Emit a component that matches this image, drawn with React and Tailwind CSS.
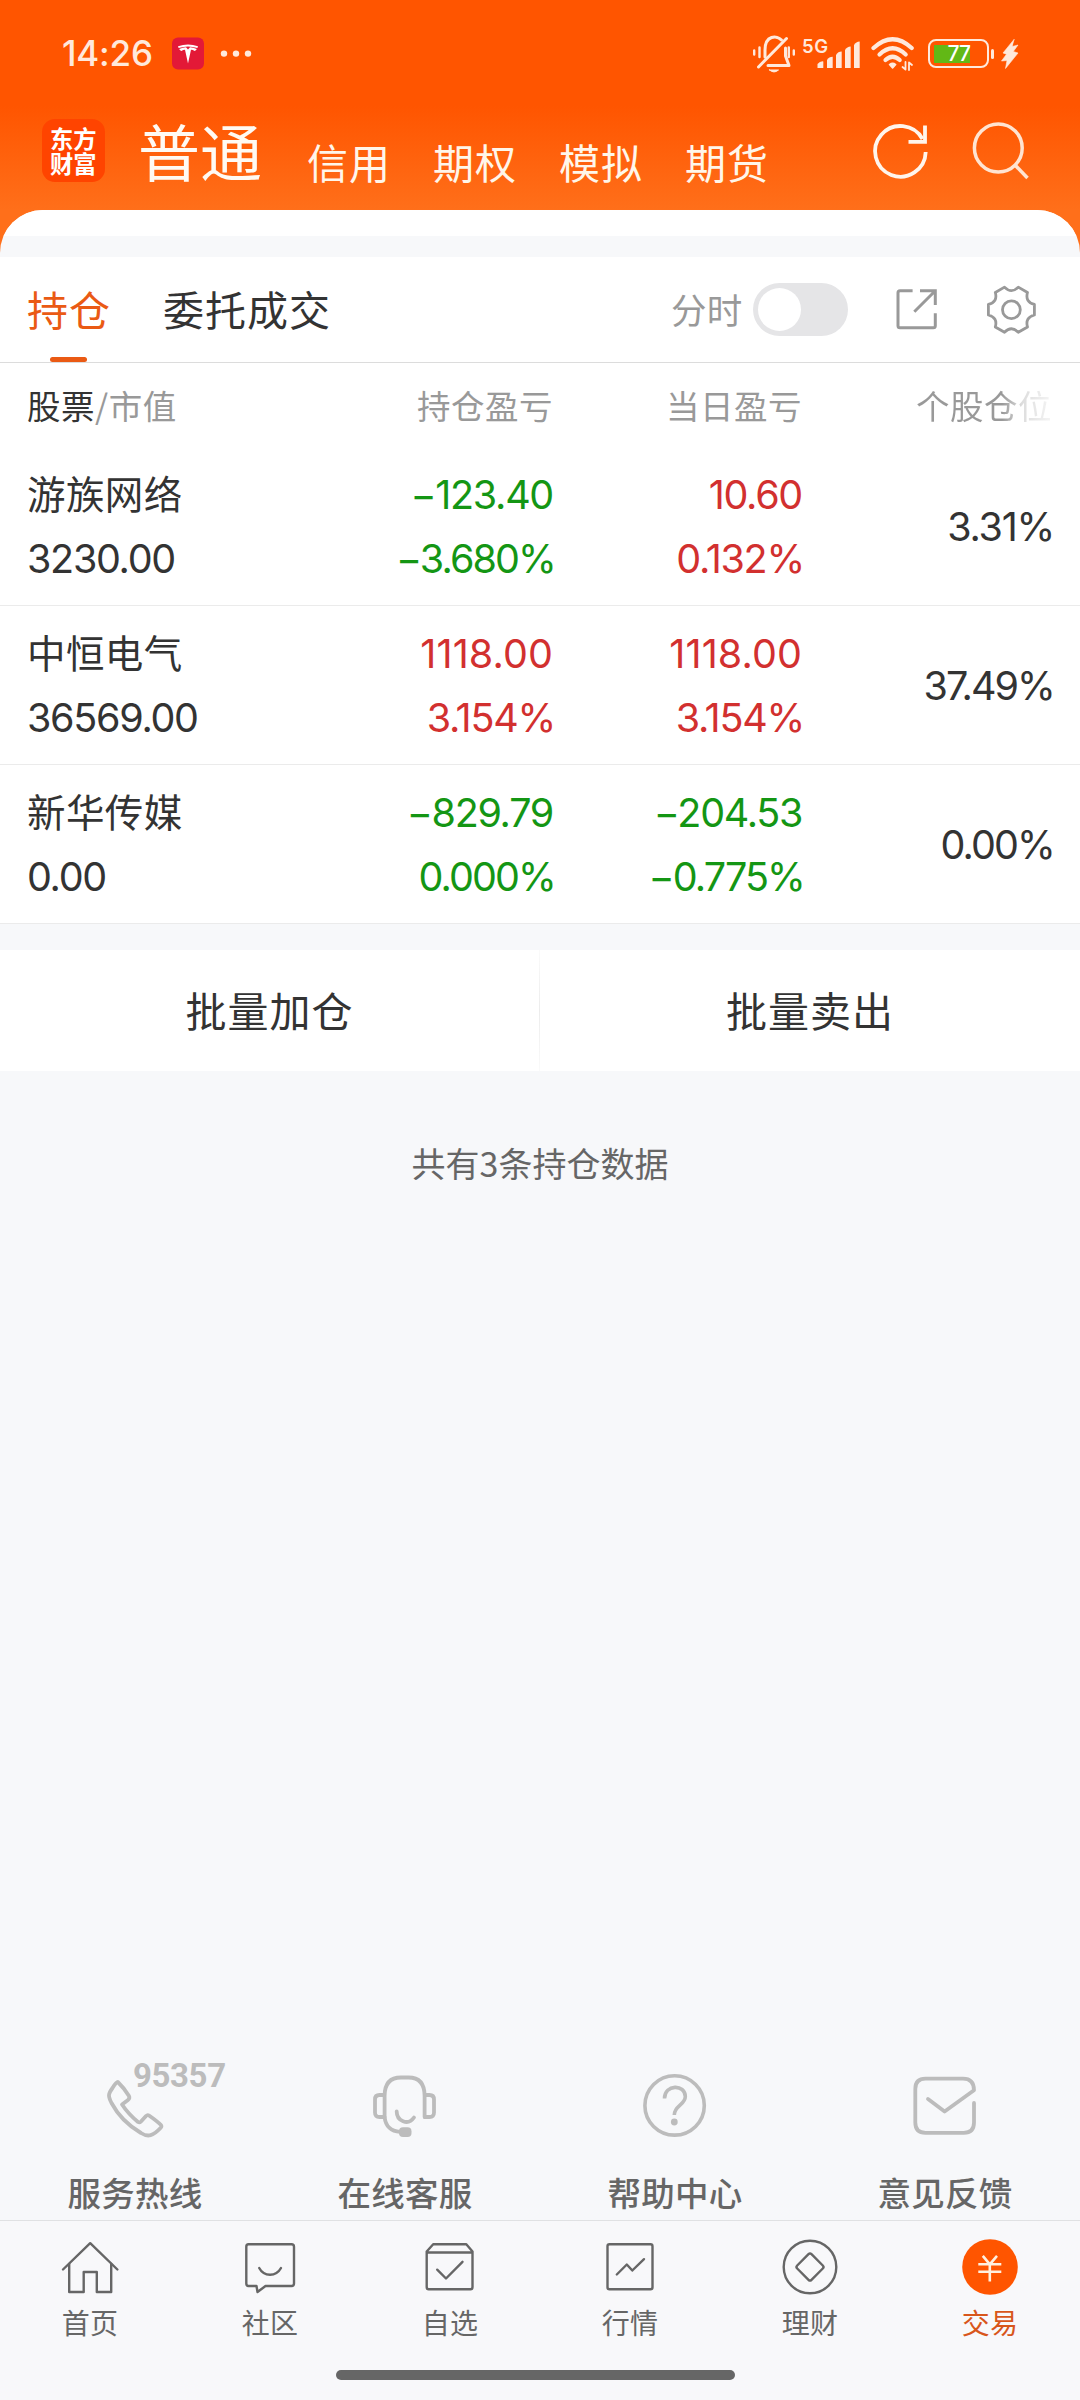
import React from "react";

const HOLDINGS = [
  { name: "游族网络", value: "3230.00", pl: ["−123.40", "−3.680%"], day: ["10.60", "0.132%"], ratio: "3.31%" },
  { name: "中恒电气", value: "36569.00", pl: ["1118.00", "3.154%"], day: ["1118.00", "3.154%"], ratio: "37.49%" },
  { name: "新华传媒", value: "0.00", pl: ["−829.79", "0.000%"], day: ["−204.53", "−0.775%"], ratio: "0.00%" },
];

const isDown = (pair) => pair.some((t) => t.startsWith("−"));

/* Figures are set slightly tight; percentages tighter still, runs of ones looser */
function figureClass(text) {
  if (text.endsWith("%")) {
    return text.includes("1") ? "tracking-[-1.25px] -mr-[2px]" : "tracking-[-1.9px] -mr-[2px]";
  }
  return text.startsWith("111") ? "tracking-[0.1px]" : "tracking-[-1.3px]";
}

/* Icon whose drawing units are screen pixels: box = "x y width height" */
function Icon({ box, className = "", width = 3, children }) {
  const [, , w, h] = box.split(" ");
  return (
    <svg
      viewBox={box}
      width={w}
      height={h}
      fill="none"
      stroke="currentColor"
      strokeWidth={width}
      strokeLinecap="round"
      strokeLinejoin="round"
      className={"shrink-0 " + className}
    >
      {children}
    </svg>
  );
}

function gearPath(cx, cy) {
  const p = (r, deg) => {
    const a = (deg * Math.PI) / 180;
    return `${(cx + r * Math.cos(a)).toFixed(2)} ${(cy + r * Math.sin(a)).toFixed(2)}`;
  };
  let d = `M${p(23.6, -13)}`;
  for (let i = 0; i < 6; i++) {
    const a = i * 60;
    d += `L${p(23.6, a + 13)}Q${p(15.5, a + 30)} ${p(23.6, a + 47)}`;
  }
  return d + "Z";
}

function StatusBar() {
  return (
    <div className="flex h-[107px] items-center justify-between pl-[62px] pr-[60px] text-[#ffe9dc]">
      <div className="flex h-[107px] items-center">
        <span className="w-[110px] font-[Inter] text-[35px] font-medium leading-[107px] tracking-[-0.200px]">14:26</span>
        <Icon box="172 38 32 33" width={2}>
          <rect x="172" y="38.500" width="32" height="32" rx="6" fill="#e31937" stroke="none" />
          <g fill="#fff" stroke="none">
            <path d="M178 47.300Q188 43.500 198 47.300L197.400 49Q188 45.800 178.600 49Z" />
            <path d="M179.200 50Q183 48.200 186 48.200L188 50.500L190 48.200Q193 48.200 196.800 50Q196.200 51.700 194.500 52Q193 50.800 191 50.800L188 64.500L185 50.800Q183 50.800 181.500 52Q179.800 51.700 179.200 50Z" />
          </g>
        </Icon>
        <Icon box="218 48 36 14" className="ml-[14px]">
          <g fill="currentColor" stroke="none">
            <circle cx="224" cy="54.600" r="3.200" />
            <circle cx="236" cy="54.600" r="3.200" />
            <circle cx="248" cy="54.600" r="3.200" />
          </g>
        </Icon>
      </div>
      <div className="flex h-[107px] items-center">
        <Icon box="752 34 44 40" width={3}>
          <path d="M765 57V50C765 35 777 35 781.500 40" />
          <path d="M785.500 48V56L789 65.500H768" />
          <path d="M786.500 38.500L758.500 67" />
          <path d="M769.500 70H778.500Q774 74 769.500 70Z" fill="currentColor" strokeWidth="1" />
          <path d="M754.200 50.500V54.500M759.500 47.500V57M788.800 47.500V57M793.800 50.500V54.500" strokeWidth="2.400" />
        </Icon>
        <span className="ml-[6px] h-[36px] w-[15px] whitespace-nowrap font-[Inter] text-[18.500px] font-semibold leading-[20px] tracking-[0.600px]">5G</span>
        <Icon box="817 38 44 32">
          <g fill="currentColor" stroke="none">
            <path d="M817.500 68V64Q820 61 823.300 61.400V68Z" />
            <path d="M827 68V60Q829 56.700 832.700 56.700V68Z" />
            <path d="M836 68V55Q838 51.600 841.700 51.600V68Z" />
            <path d="M845 68V50Q847 46.500 850.700 46.500V68Z" />
            <path d="M854 68V45Q856 41.500 859.700 41.500V68Z" />
          </g>
        </Icon>
        <Icon box="870 36 46 38" className="ml-[9px]" width={4.200}>
          <path d="M873.500 49Q892.600 31.500 911.700 49" />
          <path d="M879.500 55.500Q892.600 43 905.700 55.500" />
          <path d="M885.500 61Q892.600 54.500 899.700 61" />
          <path d="M889.500 65.500Q892.600 63 895.700 65.500L892.600 69Z" fill="currentColor" strokeWidth="1.500" />
          <path d="M905.500 63V70.500L902.500 68M909 71V63.500L912 66" strokeWidth="1.800" />
        </Icon>
        <div className="ml-[12px] flex h-[29px] w-[61px] items-center rounded-[8px] border-[2.500px] border-[#ffe9dc] pl-[4px]">
          <div className="flex h-[18px] w-[36px] items-center justify-end bg-[#62b816]">
            <span className="font-[Inter] text-[21px] font-medium leading-[18px] tracking-[-1px] text-white">77</span>
          </div>
        </div>
        <div className="ml-[2px] h-[10px] w-[3px] rounded-full bg-[#ffe9dc]" />
        <Icon box="1000 38 20 34" className="ml-[6px]" width={0.600}>
          <path d="M1014 40.500L1003 54L1006.500 55.200L1001.500 62L1007 61.500L1005.500 69.500L1018 54L1013.300 52.500L1018 46L1012.300 47.500Z" fill="currentColor" />
        </Icon>
      </div>
    </div>
  );
}

function AccountBar() {
  return (
    <div className="flex h-[103px] items-start pl-[42px]">
      <div className="mt-[12px] flex h-[63px] w-[63px] items-center justify-center rounded-[13px] bg-[#ff4400] text-white">
        <p className="w-[47px] break-all text-[23.300px] font-bold leading-[25px]">东方财富</p>
      </div>
      <div className="ml-[33px] mt-[11px] h-[64px] w-[126px] text-[62px] leading-[64px] text-[#fffaf3]">普通</div>
      <div className="mt-[30px] flex w-[545px] pl-[43px] text-[41px] leading-[48px] tracking-[1px] text-[#fff6ea]">
        {["信用", "期权", "模拟", "期货"].map((t) => (
          <span key={t} className="w-[126px] shrink-0">{t}</span>
        ))}
      </div>
      <div className="ml-[61px] flex">
        <Icon box="870 120 60 70" width={3.800} className="mt-[11px] text-[#fff5ec]">
          <path d="M925.700 154A25.300 25.300 0 1 1 922.500 141" strokeLinecap="butt" />
          <path d="M925 127.500V143.800H908.500" strokeLinecap="butt" strokeLinejoin="miter" />
        </Icon>
        <Icon box="970 120 60 70" width={3.500} className="ml-[40px] mt-[11px] text-[#ffe4d2]">
          <circle cx="998.300" cy="150" r="23.900" />
          <path d="M1015 167L1027.500 180" strokeLinecap="butt" />
        </Icon>
      </div>
    </div>
  );
}

function Tabs() {
  return (
    <div className="flex h-[106px] shrink-0 items-start border-b border-[#dcdcdc] bg-white pl-[27px]">
      <div className="flex h-[105px] w-[84px] flex-col items-center justify-between text-[41px] tracking-[1px] text-[#ea5a14]">
        <span className="leading-[102px]">持仓</span>
        <span className="-mt-[6px] ml-[-1px] h-[5px] w-[37px] shrink-0 rounded-full bg-[#ea5a14]" />
      </div>
      <div className="ml-[52px] w-[508px] text-[41px] leading-[102px] tracking-[1px] text-[#333]">委托成交</div>
      <span className="w-[72px] text-[35.500px] leading-[103px] tracking-[0.300px] text-[#999]">分时</span>
      <div className="ml-[10px] mt-[26px] flex h-[53px] w-[95px] items-center rounded-full bg-[#e5e5e7] pl-[5px]">
        <div className="h-[43px] w-[43px] rounded-full bg-white" />
      </div>
      <Icon box="894 286 46 46" className="ml-[46px] mt-[29px] text-[#999]">
        <g strokeLinecap="butt" strokeLinejoin="miter">
          <path d="M912.600 290.800H900Q898 290.800 898 292.800V325.800Q898 327.800 900 327.800H933.300Q935.300 327.800 935.300 325.800V313.300" />
          <path d="M920 290.800H935.300V305M935.300 290.800L914.300 311.700" />
        </g>
      </Icon>
      <Icon box="984 282 56 56" className="ml-[44px] mt-[25px] text-[#999]" width={2.800}>
        <path d={gearPath(1011.4, 309.7)} />
        <circle cx="1011.400" cy="309.700" r="8.900" />
      </Icon>
    </div>
  );
}

function Pair({ lines }) {
  return (
    <div className={"flex flex-col text-right " + (isDown(lines) ? "text-[#149614]" : "text-[#d2302f]")}>
      {lines.map((t) => (
        <span key={t} className={"h-[64px] " + figureClass(t)}>{t}</span>
      ))}
    </div>
  );
}

function Holdings() {
  return (
    <div className="shrink-0 bg-white">
      <div className="grid h-[84px] grid-cols-[273px_253px_249px_250px] pl-[27px] text-[33.500px] leading-[84px] tracking-[0.500px] text-[#999]">
        <div><span className="text-[#333]">股票</span>/市值</div>
        <div className="text-right">持仓盈亏</div>
        <div className="text-right">当日盈亏</div>
        <div className="bg-[linear-gradient(90deg,#999_200px,#ddd_220px,#f4f4f4_249px)] bg-clip-text text-right text-transparent">个股仓位</div>
      </div>
      {HOLDINGS.map((h) => (
        <div
          key={h.name}
          className="grid h-[159px] grid-cols-[273px_253px_249px_250px] border-b border-[#ebebeb] pl-[27px] pt-[16px] font-[Inter,'Noto_Sans_CJK_SC',sans-serif] text-[39.500px] leading-[64px] text-[#333]"
        >
          <div className="flex flex-col">
            <span className="h-[64px] text-[38.500px] tracking-[0.400px]">{h.name}</span>
            <span className={"h-[64px] " + figureClass(h.value)}>{h.value}</span>
          </div>
          <Pair lines={h.pl} />
          <Pair lines={h.day} />
          <div className={"text-right leading-[128px] " + figureClass(h.ratio)}>{h.ratio}</div>
        </div>
      ))}
    </div>
  );
}

function Service({ label, children }) {
  return (
    <div className="flex w-[270px] flex-col items-center">
      <div className="flex h-[90px] w-[200px] justify-center">{children}</div>
      <span className="mt-[19px] text-[33.500px] font-medium leading-[50px] tracking-[0.300px] text-[#666]">{label}</span>
    </div>
  );
}

function Services() {
  return (
    <div className="flex h-[162px] text-[#bcbcbc]">
      <Service label="服务热线">
        <div className="relative">
          <Icon box="100 2058 70 90" width={3.800}>
            <path d="M117.800 2082C122 2086 126 2091 129 2096Q130 2098 128 2100L122 2104.500C127 2112 132 2117 138 2122Q139.500 2123 141 2121.500L146 2116Q147.500 2114.500 149 2115.500C154 2119 158 2122 161 2125Q162 2126.500 160.500 2128C153 2136 148 2137.500 141 2133C129 2126 119 2117 111.500 2103C108 2096 108 2094 112.500 2088C115 2084 116.500 2082 117.800 2082Z" />
          </Icon>
          <span className="absolute left-[33px] top-[1px] font-[Roboto] text-[33px] font-bold leading-[34px] tracking-[-0.4px]">95357</span>
        </div>
      </Service>
      <Service label="在线客服">
        <Icon box="370 2058 70 90" width={3.800}>
          <path d="M384.600 2117V2096Q384.600 2077.500 401 2077.500H408.500Q424.600 2077.500 424.600 2096V2117" />
          <path d="M384 2095H379.500Q375 2095 375 2099.500V2112.500Q375 2117 379.500 2117H384.600C385.500 2126 391 2131.500 400 2131.800" />
          <path d="M425 2095H429.500Q434 2095 434 2099.500V2112.500Q434 2117 429.500 2117H425" />
          <path d="M396.700 2111.500C396.700 2121 408 2126 414 2117.500" />
          <rect x="399" y="2127.300" width="12.500" height="9.700" rx="4" fill="currentColor" stroke="none" />
        </Icon>
      </Service>
      <Service label="帮助中心">
        <Icon box="640 2058 70 90" width={3.600}>
          <circle cx="674.600" cy="2105.400" r="29.700" />
          <path d="M664.500 2098.500C664.500 2084 685.300 2084 685.300 2096.500C685.300 2105 674.300 2105.500 674.300 2115" strokeLinecap="butt" />
          <circle cx="674.300" cy="2122" r="3.400" fill="currentColor" stroke="none" />
        </Icon>
      </Service>
      <Service label="意见反馈">
        <Icon box="910 2058 70 90" width={3.800}>
          <path d="M928 2099L944.600 2111.500L974 2090.300Q974 2078.600 963 2078.600H925.500Q915.300 2078.600 915.300 2089V2122.500Q915.300 2132.800 925.500 2132.800H963.800Q974 2132.800 974 2122.500V2103" />
        </Icon>
      </Service>
    </div>
  );
}

function NavItem({ label, active, children }) {
  return (
    <div className={"flex w-[180px] flex-col items-center " + (active ? "text-[#d8561b]" : "text-[#666]")}>
      <div className="mt-[15px] flex h-[62px] justify-center">{children}</div>
      <span className="mt-[3px] text-[28px] leading-[42px] tracking-[0.300px]">{label}</span>
    </div>
  );
}

function BottomNav() {
  return (
    <div className="flex h-[180px] flex-col items-center border-t border-[#e0e1e3] bg-[#f8f8fa]">
      <div className="flex h-[149px]">
        <NavItem label="首页">
          <Icon box="59 2236 62 62" width={2.400}>
            <path d="M63 2269.500L90.200 2243.200L117.400 2269.500" />
            <path d="M69.200 2264V2292H83.700V2272H96.800V2292H111.200V2264" />
          </Icon>
        </NavItem>
        <NavItem label="社区">
          <Icon box="239 2236 62 62" width={2.400}>
            <path d="M248.500 2244.300H291.500Q294 2244.300 294 2246.800V2283.500Q294 2286 291.500 2286H265.500L257.500 2292L256.500 2286H248.500Q246.300 2286 246.300 2283.500V2246.800Q246.300 2244.300 248.500 2244.300Z" />
            <path d="M259.200 2268C264 2277 276 2277 281 2268" />
          </Icon>
        </NavItem>
        <NavItem label="自选">
          <Icon box="419 2236 62 62" width={2.400}>
            <path d="M426.700 2251.500L433.200 2244.300H466.300L472.500 2251.500V2287Q472.500 2289.300 470.500 2289.300H428.700Q426.700 2289.300 426.700 2287ZM426.700 2252.500H472.500" />
            <path d="M437.200 2269.700L446 2278.500L462.500 2261.800" />
          </Icon>
        </NavItem>
        <NavItem label="行情">
          <Icon box="599 2236 62 62" width={2.400}>
            <rect x="607.500" y="2244.300" width="45" height="45" rx="2" />
            <path d="M616.800 2274.500L626.800 2264.500L632.300 2270.500L644 2259.200" />
          </Icon>
        </NavItem>
        <NavItem label="理财">
          <Icon box="779 2236 62 62" width={2.400}>
            <circle cx="810" cy="2267" r="26.300" />
            <path d="M808.500 2254.200Q810 2252.700 811.500 2254.200L822.800 2265.500Q824.300 2267 822.800 2268.500L811.500 2279.800Q810 2281.300 808.500 2279.800L797.200 2268.500Q795.700 2267 797.200 2265.500Z" />
          </Icon>
        </NavItem>
        <NavItem label="交易" active>
          <Icon box="959 2236 62 62" width={2.600} className="text-[#fff0e0]">
            <circle cx="990" cy="2267" r="27.800" fill="#ff5500" stroke="none" />
            <path d="M982.800 2255.800L989.800 2264.300L997 2255.800M989.800 2264.300V2281.500M978.300 2264.300H1001.300M978.300 2271.700H1001.300" strokeLinecap="butt" />
          </Icon>
        </NavItem>
      </div>
      <div className="mr-[9px] h-[10px] w-[399px] rounded-full bg-[#666]" />
    </div>
  );
}

export default function App() {
  return (
    <div className="flex h-[2400px] w-[1080px] flex-col overflow-hidden bg-[#f7f8fa] font-['Noto_Sans_CJK_SC',sans-serif]">
      <header className="h-[257px] shrink-0 bg-[linear-gradient(180deg,#ff5500_0px,#ff5500_106px,#ff6f1a_210px)]">
        <StatusBar />
        <AccountBar />
        <div className="h-[47px] overflow-hidden rounded-t-[43px] bg-[#f7f8fa]">
          <div className="h-[26px] bg-white" />
        </div>
      </header>
      <Tabs />
      <Holdings />
      <div className="mt-[26px] flex h-[121px] shrink-0 bg-white text-[41px] leading-[119px] tracking-[1px] text-[#333]">
        <div className="w-[539px] text-center">批量加仓</div>
        <div className="w-px bg-[linear-gradient(180deg,#fafafa,#ececec,#fafafa)]" />
        <div className="flex-1 text-center">批量卖出</div>
      </div>
      <div className="mt-[67px] text-center text-[34px] leading-[50px] text-[#666]">共有3条持仓数据</div>
      <div className="mt-auto">
        <Services />
        <BottomNav />
      </div>
    </div>
  );
}
